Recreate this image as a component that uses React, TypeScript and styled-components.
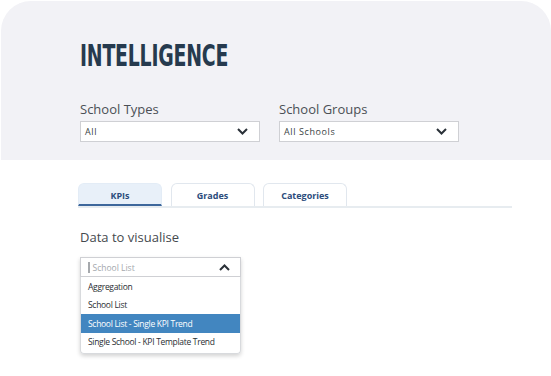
import React from 'react';
import styled, { createGlobalStyle } from 'styled-components';

const GlobalStyle = createGlobalStyle`
  html, body {
    margin: 0;
    padding: 0;
    background: #ffffff;
    font-family: 'Open Sans', 'Noto Sans', sans-serif;
  }
`;

const Chevron = ({ up }: { up?: boolean }) => (
  <svg width="11" height="7" viewBox="0 0 11 7">
    <path
      d={up ? 'M1 6 L5.5 1.5 L10 6' : 'M1 1 L5.5 5.5 L10 1'}
      fill="none"
      stroke="#2a3138"
      strokeWidth="2"
    />
  </svg>
);

const App = () => {
  const options = [
    'Aggregation',
    'School List',
    'School List - Single KPI Trend',
    'Single School - KPI Template Trend',
  ];

  return (
    <Page>
      <GlobalStyle />
      <Header>
        <Title>INTELLIGENCE</Title>
        <FilterRow>
          <Field>
            <Label>School Types</Label>
            <Select>
              <SelectText>All</SelectText>
              <Chevron />
            </Select>
          </Field>
          <Field>
            <Label>School Groups</Label>
            <Select>
              <SelectText>All Schools</SelectText>
              <Chevron />
            </Select>
          </Field>
        </FilterRow>
      </Header>

      <Body>
        <Tabs>
          <Tab active>KPIs</Tab>
          <Tab>Grades</Tab>
          <Tab>Categories</Tab>
        </Tabs>

        <SectionLabel>Data to visualise</SectionLabel>
        <Combo>
          <ComboInput>
            <Caret />
            <Placeholder>School List</Placeholder>
            <Chevron up />
          </ComboInput>
          <Menu>
            {options.map((o, i) => (
              <Option key={o} selected={i === 2}>
                {o}
              </Option>
            ))}
          </Menu>
        </Combo>
      </Body>
    </Page>
  );
};

export default App;

const Page = styled.div`
  width: 551px;
  height: 376px;
  overflow: hidden;
  background: #fff;
`;

const Header = styled.div`
  margin: 1px 0 0 1px;
  height: 159px;
  background: #f2f2f6;
  border-radius: 30px 30px 0 0;
  padding: 38px 0 0 79px;
  box-sizing: border-box;
`;

const Title = styled.h1`
  margin: 0;
  font-family: 'DejaVu Sans Condensed', 'DejaVu Sans', sans-serif;
  font-stretch: condensed;
  font-weight: 700;
  font-size: 30px;
  line-height: 34px;
  color: #263a4e;
  display: inline-block;
  transform: scaleX(0.7);
  transform-origin: left center;
  letter-spacing: -0.3px;
`;

const FilterRow = styled.div`
  display: flex;
  gap: 19px;
  margin-top: 27px;
`;

const Field = styled.div`
  display: flex;
  flex-direction: column;
  width: 180px;
`;

const Label = styled.div`
  font-size: 13px;
  line-height: 18px;
  color: #4a4f55;
  margin-bottom: 3px;
`;

const Select = styled.div`
  height: 21px;
  box-sizing: border-box;
  border: 1px solid #cfd0d4;
  background: #fff;
  display: flex;
  align-items: center;
  justify-content: space-between;
  padding: 0 11px 0 4px;
`;

const SelectText = styled.span`
  font-size: 9px;
  color: #3a3f44;
  letter-spacing: 0.6px;
`;

const Body = styled.div`
  padding: 23px 0 0 78px;
`;

const Tabs = styled.div`
  display: flex;
  gap: 8.5px;
  width: 434px;
  border-bottom: 2px solid #e7ecf0;
`;

const Tab = styled.div<{ active?: boolean }>`
  width: 84px;
  height: 23px;
  box-sizing: border-box;
  display: flex;
  align-items: center;
  justify-content: center;
  border: 1px solid ${(p) => (p.active ? '#e3ecf6' : '#e1e7ee')};
  border-bottom: ${(p) => (p.active ? '2px solid #3d679c' : 'none')};
  border-radius: 6px 6px 0 0;
  background: ${(p) => (p.active ? '#e8f0f9' : '#fff')};
  font-size: 9px;
  font-weight: 700;
  color: #2c4c7c;
  padding-top: ${(p) => (p.active ? '2px' : '0')};
`;

const SectionLabel = styled.div`
  margin: 20px 0 0 2px;
  font-size: 13px;
  line-height: 18px;
  color: #45494e;
`;

const Combo = styled.div`
  margin: 11px 0 0 2px;
  width: 161px;
  border-radius: 0 0 4px 4px;
  box-shadow: 0 2px 4px rgba(0, 0, 0, 0.18);
`;

const ComboInput = styled.div`
  height: 20px;
  box-sizing: border-box;
  border: 1px solid #cfd0d4;
  display: flex;
  align-items: center;
  padding: 0 10px 0 7px;
`;

const Caret = styled.span`
  width: 1.5px;
  height: 11px;
  background: #a6a9ad;
  margin-right: 3px;
`;

const Placeholder = styled.span`
  flex: 1;
  font-size: 8.5px;
  color: #a4a8ad;
`;

const Menu = styled.div`
  border: 1px solid #d8dadd;
  border-top: none;
  border-radius: 0 0 4px 4px;
  background: #fff;
  padding: 0 0 2px;
`;

const Option = styled.div<{ selected?: boolean }>`
  height: 18.5px;
  display: flex;
  align-items: center;
  padding: 0 7px;
  font-size: 8.5px;
  letter-spacing: -0.3px;
  color: ${(p) => (p.selected ? '#fff' : '#2a2e33')};
  background: ${(p) => (p.selected ? '#4286c0' : 'transparent')};
`;
